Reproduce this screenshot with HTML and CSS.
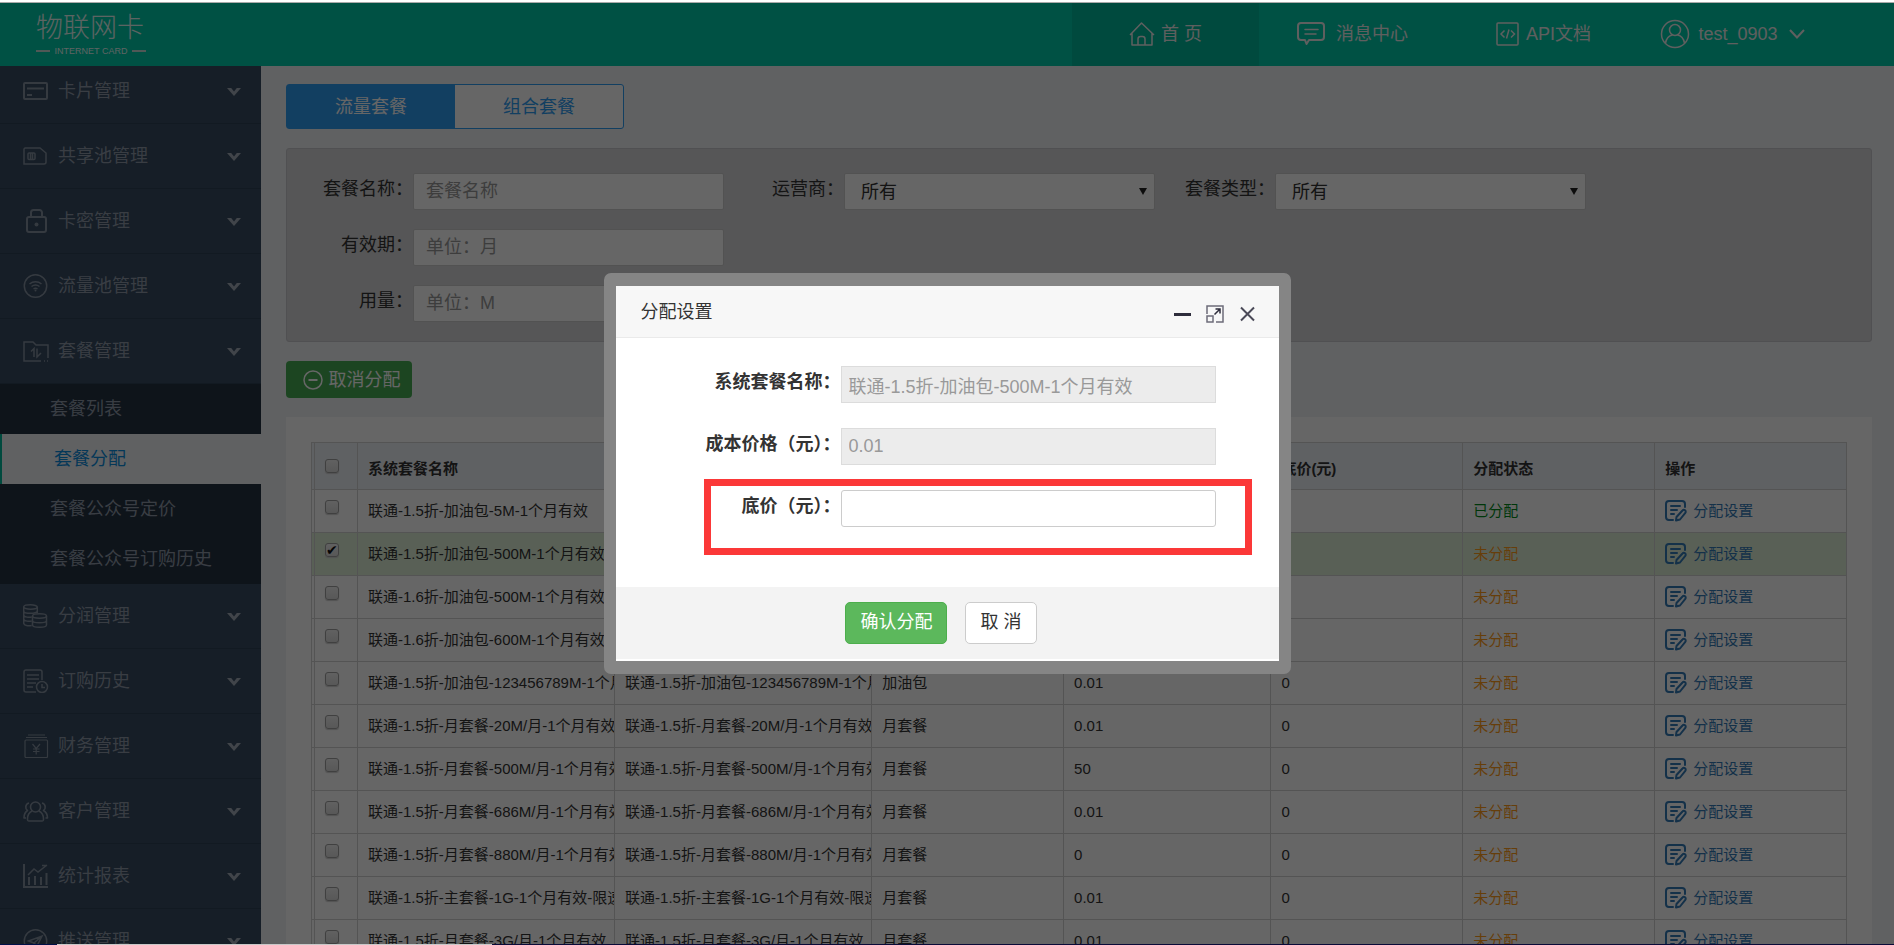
FILE: index.html
```html
<!DOCTYPE html>
<html lang="zh-CN">
<head>
<meta charset="utf-8">
<title>套餐分配</title>
<link rel="stylesheet" href="styles.css">
</head>
<body>
<svg class="sprite" aria-hidden="true">
  <symbol id="chev" viewBox="0 0 14 9"><path d="M0 0h4.200L7 3.400 9.800 0H14L7 8z" fill="currentColor"/></symbol>
  <symbol id="edit" viewBox="0 0 22 22"><g fill="none" stroke="currentColor" stroke-width="2" stroke-linecap="round" stroke-linejoin="round"><path d="M8 20H4a3 3 0 0 1-3-3V4a3 3 0 0 1 3-3h13a3 3 0 0 1 3 3v3"/><path d="M6 6h9M6 10h6M6 14h3"/><path d="M11 20.500l.500-3.500 6-6.500a1.800 1.800 0 0 1 2.800 2.300L15 19.500z"/></g></symbol>
</svg>
<div class="app">
  <div class="window-edge"></div>
  <header class="topbar">
    <div class="logo"><span class="logo-name">物联网卡</span><span class="logo-sub">INTERNET CARD</span></div>
    <nav class="topnav">
      <a class="topnav-item current" href="#"><svg class="i-home" viewBox="0 0 26 24"><g fill="none" stroke="currentColor" stroke-width="1.500" stroke-linejoin="round"><path d="M1 13L12.500 1 25 13M3 11.500V23h20V11.500"/><path d="M9 23v-6a2.500 2.500 0 0 1 2.500-2.500h2A2.500 2.500 0 0 1 16 17v6"/></g></svg><span>首 页</span></a>
      <a class="topnav-item msg" href="#"><svg class="i-msg" viewBox="0 0 28 24"><g fill="none" stroke="currentColor" stroke-width="2" stroke-linejoin="round" stroke-linecap="round"><path d="M4 1h20a3 3 0 0 1 3 3v11a3 3 0 0 1-3 3H12l-2.500 4L8 18H4a3 3 0 0 1-3-3V4a3 3 0 0 1 3-3z"/><path d="M8 7.500h13M8 12h11" stroke-width="1.500"/></g></svg><span>消息中心</span></a>
      <a class="topnav-item api" href="#"><svg class="i-api" viewBox="0 0 24 24"><g fill="none" stroke="currentColor" stroke-width="1.500"><rect x="1" y="1" width="21" height="22" rx="1"/><path d="M8.500 8.500L5 12l3.500 3.500M15 8.500l3.500 3.500-3.500 3.500M13 7.500l-2.500 9"/></g></svg><span>API文档</span></a>
      <a class="topnav-item user" href="#"><svg class="i-user" viewBox="0 0 30 30"><g fill="none" stroke="currentColor" stroke-width="1.500"><circle cx="15" cy="15" r="13.500"/><circle cx="15" cy="11" r="5.500"/><path d="M5.500 24c1-5 4.500-7.500 7-8M24.500 24c-1-5-4.500-7.500-7-8"/></g></svg><span>test_0903</span><svg class="i-down" viewBox="0 0 16 10"><path d="M1 1l7 7.500L15 1" fill="none" stroke="currentColor" stroke-width="2"/></svg></a>
    </nav>
  </header>

  <div class="columns">
    <aside class="sidebar">
      <nav class="menu">
        <a class="menu-item" href="#"><svg class="mi" viewBox="0 0 26 24"><g fill="none" stroke="currentColor" stroke-width="2"><rect x="1" y="4" width="23" height="16" rx="1"/><path d="M4 9.500h17M4 16h5"/></g></svg>卡片管理<svg class="chev"><use href="#chev"/></svg></a>
        <a class="menu-item" href="#"><svg class="mi" viewBox="0 0 26 24"><g fill="none" stroke="currentColor" stroke-width="1.500"><path d="M2 4h15l6 5v9a2 2 0 0 1-2 2H1V5z"/><rect x="5" y="9" width="7" height="6.500" rx="1"/><path d="M7.500 9v6.500M9.500 9v6.500"/></g></svg>共享池管理<svg class="chev"><use href="#chev"/></svg></a>
        <a class="menu-item" href="#"><svg class="mi" viewBox="0 0 26 24"><g fill="none" stroke="currentColor" stroke-width="2"><rect x="4" y="8" width="19" height="15" rx="2"/><path d="M8 8V3.500A2.500 2.500 0 0 1 10.500 1h6A2.500 2.500 0 0 1 19 3.500V8"/></g><circle cx="13.500" cy="15.500" r="2" fill="currentColor"/></svg>卡密管理<svg class="chev"><use href="#chev"/></svg></a>
        <a class="menu-item" href="#"><svg class="mi" viewBox="0 0 26 24"><g fill="none" stroke="currentColor" stroke-width="1.500"><circle cx="12.500" cy="12" r="11.200"/><path d="M6.500 10c3.500-3 8.500-3 12 0M8.500 12.500c2.500-2 5.500-2 8 0M10.500 15c1.500-1 2.500-1 4 0"/></g><circle cx="12.500" cy="16.500" r="1" fill="currentColor"/></svg>流量池管理<svg class="chev"><use href="#chev"/></svg></a>
        <a class="menu-item" href="#"><svg class="mi" viewBox="0 0 26 24"><g fill="none" stroke="currentColor" stroke-width="1.500"><path d="M18 22H1V3h9l3 3h12v13M21 22h1M24 22h1"/><path d="M8 12.500l3-3V18M14 9.500V18l4-4"/></g></svg>套餐管理<svg class="chev"><use href="#chev"/></svg></a>
        <div class="submenu">
          <a class="sub-item" href="#">套餐列表</a>
          <a class="sub-item active" href="#">套餐分配</a>
          <a class="sub-item" href="#">套餐公众号定价</a>
          <a class="sub-item" href="#">套餐公众号订购历史</a>
        </div>
        <a class="menu-item" href="#"><svg class="mi" viewBox="0 0 26 24"><g fill="none" stroke="currentColor" stroke-width="1.500"><ellipse cx="7.500" cy="3" rx="6.800" ry="2.200"/><path d="M.7 3v16c0 3 5 3 8 2.500M14.300 3v6M.7 7c0 3 13.600 3 13.600 0M.7 11c0 2.500 6 2.500 8 2M.7 15c0 2.500 6 2.500 8 2"/><ellipse cx="16.500" cy="12" rx="7" ry="2.200"/><path d="M9.500 12v9c0 3 14 3 14 0v-9M9.500 16.500c0 3 14 3 14 0"/></g></svg>分润管理<svg class="chev"><use href="#chev"/></svg></a>
        <a class="menu-item" href="#"><svg class="mi" viewBox="0 0 26 24"><g fill="none" stroke="currentColor" stroke-width="1.500"><path d="M13 23H3a2 2 0 0 1-2-2V3a2 2 0 0 1 2-2h14a2 2 0 0 1 2 2v8M4 6h12M4 10h12M4 14h9M4 18h6"/><circle cx="19" cy="18" r="5.500"/><path d="M19 15v3.500h3"/></g></svg>订购历史<svg class="chev"><use href="#chev"/></svg></a>
        <a class="menu-item" href="#"><svg class="mi" viewBox="0 0 26 24"><g fill="none" stroke="currentColor" stroke-width="1.200"><path d="M5 1h17M3 3.500h21"/><rect x="2" y="6" width="22.500" height="17.500" rx="1"/><path d="M9.500 10l3.700 4.500L17 10M13.200 14.500v6M10 15h6.500M10 17.500h6.500"/></g></svg>财务管理<svg class="chev"><use href="#chev"/></svg></a>
        <a class="menu-item" href="#"><svg class="mi" viewBox="0 0 26 24"><g fill="none" stroke="currentColor" stroke-width="1.600" stroke-linejoin="round"><circle cx="12.500" cy="8" r="5"/><path d="M9 12c-3 1.500-4.500 5-4.500 8 0 1.500 0 2 1.500 2h13c1.500 0 1.500-.5 1.500-2 0-3-1.500-6.500-4.500-8"/><path d="M6 4C2 5 2 10 4.500 11.500 2 13 1 16 1 19h2M19 4c4 1 4 6 1.500 7.500C23 13 24.500 16 24.500 19h-2"/></g></svg>客户管理<svg class="chev"><use href="#chev"/></svg></a>
        <a class="menu-item" href="#"><svg class="mi" viewBox="0 0 26 24"><g fill="none" stroke="currentColor" stroke-width="2"><path d="M1 0v23h24M6 21v-8M12 21v-9M18 21v-8M23.500 21V9"/><path d="M5 11l6-6 4 3 9-7M19 1.500h5" stroke-width="1.500"/></g></svg>统计报表<svg class="chev"><use href="#chev"/></svg></a>
        <a class="menu-item" href="#"><svg class="mi" viewBox="0 0 26 24"><g fill="none" stroke="currentColor" stroke-width="1.500"><circle cx="12.500" cy="12" r="11.200"/><path d="M5.500 12L19 7l-5 10-3-3zM19 7l-8 7v4"/></g></svg>推送管理<svg class="chev"><use href="#chev"/></svg></a>
      </nav>
    </aside>

    <main class="content">
      <div class="tabs"><button class="tab on" type="button">流量套餐</button><button class="tab" type="button">组合套餐</button></div>
      <form class="filters">
        <div class="filter-row">
          <div class="field"><label for="f1">套餐名称：</label><input id="f1" type="text" placeholder="套餐名称"></div>
          <div class="field"><label for="f2">运营商：</label><select id="f2"><option>所有</option></select></div>
          <div class="field"><label for="f3">套餐类型：</label><select id="f3"><option>所有</option></select></div>
        </div>
        <div class="filter-row"><div class="field"><label for="f4">有效期：</label><input id="f4" type="text" placeholder="单位：月"></div></div>
        <div class="filter-row"><div class="field"><label for="f5">用量：</label><input id="f5" type="text" placeholder="单位：M"></div></div>
      </form>
      <button class="revoke" type="button"><svg class="i-minus" viewBox="0 0 20 20"><g fill="none" stroke="currentColor"><circle cx="10" cy="10" r="9" stroke-width="1.500"/><path d="M5.500 10h9" stroke-width="2"/></g></svg>取消分配</button>
      <section class="panel">
        <table class="grid">
          <colgroup><col class="c-edge"><col class="c-check"><col class="c-name"><col class="c-name"><col class="c-mid"><col class="c-cost"><col class="c-mid"><col class="c-mid"><col class="c-mid"></colgroup>
          <thead><tr><th></th><th><input type="checkbox" aria-label="全选"></th><th>系统套餐名称</th><th>套餐名称</th><th>套餐类型</th><th>成本价(元)</th><th>底价(元)</th><th>分配状态</th><th>操作</th></tr></thead>
          <tbody>
            <tr><td></td><td><input type="checkbox" aria-label="选择"></td><td>联通-1.5折-加油包-5M-1个月有效</td><td>联通-1.5折-加油包-5M-1个月有效</td><td>加油包</td><td>0.01</td><td>0</td><td class="done">已分配</td><td><a href="#"><svg class="i-edit"><use href="#edit"/></svg>分配设置</a></td></tr>
            <tr class="picked"><td></td><td><input type="checkbox" aria-label="选择" checked></td><td>联通-1.5折-加油包-500M-1个月有效</td><td>联通-1.5折-加油包-500M-1个月有效</td><td>加油包</td><td>0.01</td><td>0</td><td class="todo">未分配</td><td><a href="#"><svg class="i-edit"><use href="#edit"/></svg>分配设置</a></td></tr>
            <tr><td></td><td><input type="checkbox" aria-label="选择"></td><td>联通-1.6折-加油包-500M-1个月有效</td><td>联通-1.6折-加油包-500M-1个月有效</td><td>加油包</td><td>0.01</td><td>0</td><td class="todo">未分配</td><td><a href="#"><svg class="i-edit"><use href="#edit"/></svg>分配设置</a></td></tr>
            <tr><td></td><td><input type="checkbox" aria-label="选择"></td><td>联通-1.6折-加油包-600M-1个月有效</td><td>联通-1.6折-加油包-600M-1个月有效</td><td>加油包</td><td>0.01</td><td>0</td><td class="todo">未分配</td><td><a href="#"><svg class="i-edit"><use href="#edit"/></svg>分配设置</a></td></tr>
            <tr><td></td><td><input type="checkbox" aria-label="选择"></td><td>联通-1.5折-加油包-123456789M-1个月有效</td><td>联通-1.5折-加油包-123456789M-1个月有效</td><td>加油包</td><td>0.01</td><td>0</td><td class="todo">未分配</td><td><a href="#"><svg class="i-edit"><use href="#edit"/></svg>分配设置</a></td></tr>
            <tr><td></td><td><input type="checkbox" aria-label="选择"></td><td>联通-1.5折-月套餐-20M/月-1个月有效</td><td>联通-1.5折-月套餐-20M/月-1个月有效</td><td>月套餐</td><td>0.01</td><td>0</td><td class="todo">未分配</td><td><a href="#"><svg class="i-edit"><use href="#edit"/></svg>分配设置</a></td></tr>
            <tr><td></td><td><input type="checkbox" aria-label="选择"></td><td>联通-1.5折-月套餐-500M/月-1个月有效</td><td>联通-1.5折-月套餐-500M/月-1个月有效</td><td>月套餐</td><td>50</td><td>0</td><td class="todo">未分配</td><td><a href="#"><svg class="i-edit"><use href="#edit"/></svg>分配设置</a></td></tr>
            <tr><td></td><td><input type="checkbox" aria-label="选择"></td><td>联通-1.5折-月套餐-686M/月-1个月有效</td><td>联通-1.5折-月套餐-686M/月-1个月有效</td><td>月套餐</td><td>0.01</td><td>0</td><td class="todo">未分配</td><td><a href="#"><svg class="i-edit"><use href="#edit"/></svg>分配设置</a></td></tr>
            <tr><td></td><td><input type="checkbox" aria-label="选择"></td><td>联通-1.5折-月套餐-880M/月-1个月有效</td><td>联通-1.5折-月套餐-880M/月-1个月有效</td><td>月套餐</td><td>0</td><td>0</td><td class="todo">未分配</td><td><a href="#"><svg class="i-edit"><use href="#edit"/></svg>分配设置</a></td></tr>
            <tr><td></td><td><input type="checkbox" aria-label="选择"></td><td>联通-1.5折-主套餐-1G-1个月有效-限速</td><td>联通-1.5折-主套餐-1G-1个月有效-限速</td><td>月套餐</td><td>0.01</td><td>0</td><td class="todo">未分配</td><td><a href="#"><svg class="i-edit"><use href="#edit"/></svg>分配设置</a></td></tr>
            <tr><td></td><td><input type="checkbox" aria-label="选择"></td><td>联通-1.5折-月套餐-3G/月-1个月有效</td><td>联通-1.5折-月套餐-3G/月-1个月有效</td><td>月套餐</td><td>0.01</td><td>0</td><td class="todo">未分配</td><td><a href="#"><svg class="i-edit"><use href="#edit"/></svg>分配设置</a></td></tr>
          </tbody>
        </table>
      </section>
    </main>
  </div>
  <div class="taskbar-edge"></div>

  <div class="mask">
    <div class="dialog" role="dialog" aria-labelledby="dlg-title">
      <div class="dialog-head">
        <span id="dlg-title">分配设置</span>
        <div class="dialog-tools">
          <button type="button" aria-label="最小化"><svg viewBox="0 0 18 18"><path d="M0 9.500h17" stroke="#2e2d3c" stroke-width="3"/></svg></button>
          <button type="button" aria-label="最大化"><svg viewBox="0 0 18 18"><g fill="none" stroke="#6d6c7a" stroke-width="1.500"><path d="M1 9V1h16v16h-7"/><rect x="1" y="11" width="6" height="6"/></g><path d="M8.500 9.500L14 4M9.500 4H14v4.500" fill="none" stroke="#2e2d3c" stroke-width="1.500"/></svg></button>
          <button type="button" aria-label="关闭"><svg viewBox="0 0 18 18"><path d="M3 2.500l13 13M16 2.500l-13 13" stroke="#4a4957" stroke-width="2"/></svg></button>
        </div>
      </div>
      <div class="dialog-body">
        <div class="line"><label for="d1">系统套餐名称：</label><input id="d1" type="text" value="联通-1.5折-加油包-500M-1个月有效" disabled></div>
        <div class="line"><label for="d2">成本价格（元）：</label><input id="d2" type="text" value="0.01" disabled></div>
        <div class="line"><label for="d3">底价（元）：</label><input id="d3" type="text"></div>
        <div class="callout"></div>
      </div>
      <div class="dialog-foot"><button class="ok" type="button">确认分配</button><button class="cancel" type="button">取 消</button></div>
    </div>
  </div>
</div>
</body>
</html>
```
FILE: styles.css
```css
* { box-sizing: border-box; }
body {
  margin: 0;
  font: 18px/24px "Liberation Sans", "Noto Sans CJK SC", sans-serif;
  color: #333;
}
a { color: inherit; text-decoration: none; }
button, input, select { font: inherit; color: inherit; margin: 0; }
svg { flex: none; }
.sprite { position: absolute; width: 0; height: 0; }

.app {
  position: relative;
  display: flex;
  flex-direction: column;
  height: 100vh;
  overflow: hidden;
  background: #f0f2f6;
}
.window-edge { height: 3px; flex: none; background: #fff; border-bottom: 1px solid #aaa; }
.taskbar-edge {
  flex: none;
  height: 1px;
  background: linear-gradient(90deg, #001048 3%, #c8c8c8 3% 26%, #0a0a38 26%);
}

.topbar {
  display: flex;
  flex: none;
  justify-content: space-between;
  height: 63px;
  padding: 0 74px 0 36px;
  background: #00caaa;
  color: #fff;
}
.logo { display: flex; flex-direction: column; width: 110px; padding-top: 8px; opacity: .9; }
.logo-name { font-size: 27px; line-height: 34px; font-weight: 300; white-space: nowrap; }
.logo-sub { display: flex; align-items: center; justify-content: space-between; font-size: 9px; line-height: 12px; }
.logo-sub::before, .logo-sub::after { content: ""; width: 14px; height: 2px; background: #ddd; }
.topnav { display: flex; color: #eee; }
.topnav-item {
  display: flex;
  align-items: center;
  justify-content: center;
  gap: 6px;
  width: 187px;
  padding-bottom: 2px;
}
.topnav-item.current { background: #00b89b; }
.topnav-item.msg { gap: 11px; }
.topnav-item.api { padding-left: 8px; }
.topnav-item.user { gap: 8px; padding-left: 12px; }
.i-home { width: 26px; height: 24px; }
.i-msg { width: 28px; height: 24px; }
.i-api { width: 24px; height: 24px; }
.i-user { width: 30px; height: 30px; }
.i-down { width: 16px; height: 10px; margin-left: 3px; }

.columns { display: flex; flex: 1; min-height: 0; }
.sidebar { flex: none; width: 261px; overflow: hidden; background: #374b61; color: #8e9aa9; }
.menu { margin-top: -7px; }
.menu-item {
  display: flex;
  align-items: center;
  height: 65px;
  padding: 0 20px 0 23px;
  border-bottom: 1px solid #2f4156;
}
.mi { width: 26px; height: 24px; margin-right: 9px; opacity: .9; }
.chev { width: 14px; height: 9px; margin: 3px 0 0 auto; color: #a3acb8; }
.submenu { background: #253243; }
.sub-item { display: flex; align-items: center; height: 50px; padding-left: 50px; }
.sub-item.active { background: #f0f2f5; border-left: 2px solid #00b89b; padding-left: 52px; color: #0c8cdc; }

.content {
  display: flex;
  flex: 1;
  flex-direction: column;
  align-items: flex-start;
  gap: 19px;
  min-width: 0;
  padding: 18px 22px 0 25px;
}
.tabs { display: flex; flex: none; border: 1px solid #2f9df2; border-radius: 3px; background: #fff; }
.tab { width: 168px; height: 43px; padding: 0; border: 0; background: none; color: #2f9df2; }
.tab.on { background: #2f9df2; color: #fff; }

.filters {
  display: flex;
  flex: none;
  flex-direction: column;
  gap: 19px;
  align-self: stretch;
  padding: 24px 6px 19px;
  border: 1px solid #c8c8cc;
  border-radius: 3px;
  background: #d6d6d9;
}
.filter-row { display: flex; }
.field { position: relative; display: flex; width: 431px; }
.field label { width: 120px; line-height: 32px; text-align: right; white-space: nowrap; }
.field input, .field select {
  flex: 1;
  min-width: 0;
  height: 37px;
  padding: 0 12px;
  border: 1px solid #ccc;
  border-radius: 2px;
  background: #fff;
}
.field select { padding: 0 16px; appearance: none; }
.field:has(select)::after {
  content: "";
  position: absolute;
  right: 8px;
  top: 15px;
  border: 4px solid transparent;
  border-top: 7px solid #222;
  border-bottom: 0;
  pointer-events: none;
}
::placeholder { color: #999; opacity: 1; }

.revoke {
  display: flex;
  flex: none;
  align-items: center;
  justify-content: center;
  gap: 6px;
  width: 126px;
  height: 37px;
  padding: 0 0 0 5px;
  border: 0;
  border-radius: 4px;
  background: #47ad53;
  color: #fff;
}
.i-minus { width: 20px; height: 20px; }

.panel { align-self: stretch; padding: 25px; background: #fff; }
.grid {
  width: 100%;
  table-layout: fixed;
  border-collapse: collapse;
  font-size: 15px;
  line-height: 20px;
}
.c-edge { width: 3px; }
.c-check { width: 43px; }
.c-name { width: 16.75%; }
.c-mid { width: 12.5%; }
.grid th, .grid td {
  height: 43px;
  padding: 0 0 0 10px;
  border: 1px solid #d2d2d2;
  overflow: hidden;
  text-align: left;
  white-space: nowrap;
}
.grid th { height: 47px; padding-top: 6px; background: #eef2f7; }
.grid th:first-child, .grid td:first-child { padding: 0; }
.grid th:nth-child(2) { padding-top: 0; }
.grid td:nth-child(2) { padding-bottom: 8px; }
.grid input {
  display: block;
  width: 14px;
  height: 14px;
  appearance: none;
  border: 1px solid #a0a0a0;
  border-radius: 3px;
  background: linear-gradient(#f2f2f2, #dcdcdc);
  box-shadow: 0 1px 1px #ccc;
}
.grid input:checked::before {
  content: "✔";
  display: block;
  font: 14px/12px "DejaVu Sans", sans-serif;
  color: #111;
}
.picked { background: #dff0d8; }
.done { color: #008a1a; }
.todo { color: #ff9c1a; }
.grid a { display: flex; align-items: center; gap: 6px; color: #337ab7; }
.i-edit { width: 22px; height: 22px; }

.mask {
  position: absolute;
  inset: 3px 0 1px;
  display: flex;
  align-items: center;
  justify-content: center;
  background: rgba(0, 0, 0, .6);
}
.dialog {
  width: 687px;
  border: solid #858585;
  border-width: 13px 12px;
  border-radius: 7px;
  background: #fff;
  padding-bottom: 2px;
}
.dialog-head {
  display: flex;
  align-items: center;
  justify-content: space-between;
  height: 52px;
  padding: 0 23px 0 25px;
  border-bottom: 1px solid #eaeaea;
  background: #f7f7f7;
}
.dialog-tools { display: flex; gap: 14px; }
.dialog-tools button { width: 18px; height: 18px; margin-top: 5px; padding: 0; border: 0; background: none; }
.dialog-tools svg { display: block; width: 18px; height: 18px; }
.dialog-body {
  position: relative;
  display: flex;
  flex-direction: column;
  gap: 25px;
  padding: 28px 63px 60px 0;
}
.line { display: flex; }
.line label { flex: 1; line-height: 32px; font-weight: 700; text-align: right; }
.line input {
  width: 375px;
  height: 37px;
  padding: 0 7px;
  border: 1px solid #ccc;
  border-radius: 3px;
  background: #fff;
}
.line input:disabled { border-color: #dcdcdc; border-radius: 0; background: #ececec; color: #999; }
/* Highlights the price field that has to be filled in */
.callout {
  position: absolute;
  left: 88px;
  right: 27px;
  top: 141px;
  height: 76px;
  border: 7px solid #fb3838;
  pointer-events: none;
}
.dialog-foot {
  display: flex;
  justify-content: center;
  gap: 18px;
  padding: 15px 12px 15px 0;
  background: #f3f3f3;
}
.dialog-foot button { height: 42px; padding: 0 14px 2px; border: 1px solid #ccc; border-radius: 5px; background: #fff; }
.dialog-foot .ok { border-color: #4cae4c; background: #5cb85c; color: #fff; }
```
